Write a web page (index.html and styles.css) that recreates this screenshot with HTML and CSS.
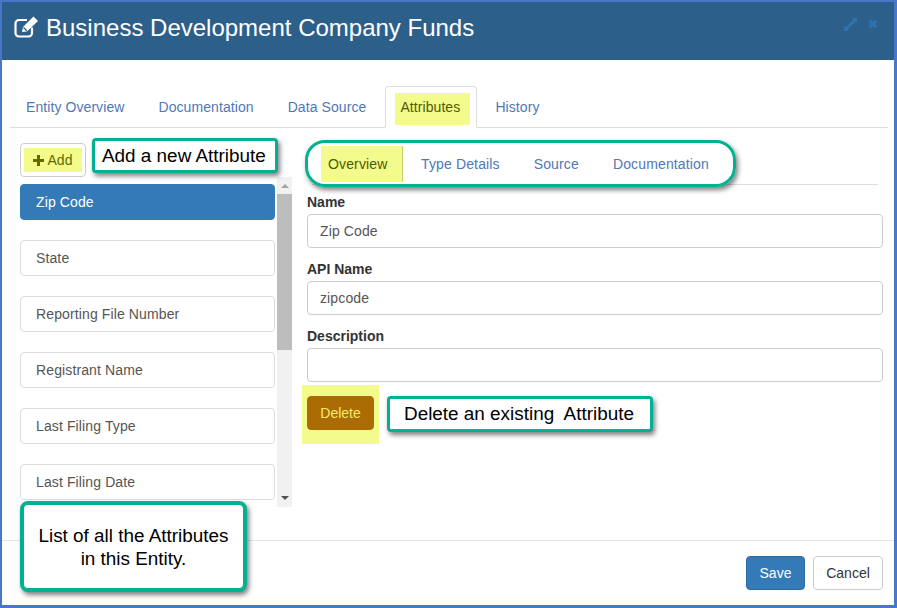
FILE: index.html
```html
<!DOCTYPE html>
<html lang="en">
<head>
  <meta charset="UTF-8" />
  <meta name="viewport" content="width=device-width, initial-scale=1.0" />
  <title>Business Development Company Funds</title>
  <link rel="stylesheet" href="styles.css">
</head>
<body>
  <div class="modal">
    <header class="modal-header">
      <h1>
        <svg class="edit-icon" width="26" height="24" viewBox="0 0 26 24">
          <path d="M18 12.500V18a3.500 3.500 0 0 1-3.500 3.500H5A3.500 3.500 0 0 1 1.500 18V8.500A3.500 3.500 0 0 1 5 5h8" fill="none" stroke="#fff" stroke-width="2.200"/>
          <path d="M8 17l1-5L19.500 1.500l4.500 4.500L13 16.500z" fill="#fff"/>
          <path d="M9.500 12.500l3.500 3.500" stroke="#2d5f8b" stroke-width="1.200"/>
        </svg>
        Business Development Company Funds
      </h1>
      <div class="header-icons">
        <svg width="13" height="13" viewBox="0 0 14 14">
          <path d="M8 0h6v6l-2-2-8 8 2 2H0V8l2 2 8-8z" fill="#2f72ac"/>
        </svg>
        <svg width="10" height="10" viewBox="0 0 12 12">
          <path d="M2 2l8 8M10 2l-8 8" stroke="#2f72ac" stroke-width="3.800"/>
        </svg>
      </div>
    </header>

    <div class="modal-body">
      <ul class="tabs">
        <li><a>Entity Overview</a></li>
        <li><a>Documentation</a></li>
        <li class="before-active"><a>Data Source</a></li>
        <li class="active"><a><span class="mark">Attributes</span></a></li>
        <li><a>History</a></li>
      </ul>

      <div class="columns">
        <div class="left-col">
          <button class="btn btn-add"><span class="mark-add"><svg width="11" height="11" viewBox="0 0 11 11"><path d="M4 0h3v4h4v3H7v4H4V7H0V4h4z" fill="#5f6a00"/></svg> Add</span></button>
          <div class="list-wrap">
            <div class="list">
              <div class="item selected">Zip Code</div>
              <div class="item">State</div>
              <div class="item">Reporting File Number</div>
              <div class="item">Registrant Name</div>
              <div class="item">Last Filing Type</div>
              <div class="item">Last Filing Date</div>
            </div>
            <div class="scrollbar">
              <div class="arrow-up"></div>
              <div class="thumb"></div>
              <div class="arrow-down"></div>
            </div>
          </div>
        </div>

        <div class="right-col">
          <ul class="subtabs">
            <li class="active"><a>Overview</a></li>
            <li><a>Type Details</a></li>
            <li><a>Source</a></li>
            <li><a>Documentation</a></li>
          </ul>
          <label>Name</label>
          <input type="text" value="Zip Code">
          <label>API Name</label>
          <input type="text" value="zipcode">
          <label>Description</label>
          <input class="input-last" type="text" value="">
          <div class="delete-mark">
            <button class="btn btn-delete">Delete</button>
          </div>
        </div>
      </div>
    </div>

    <footer class="modal-footer">
      <button class="btn btn-save">Save</button>
      <button class="btn btn-cancel">Cancel</button>
    </footer>

    <!-- annotations on top of the screen -->
    <div class="callout callout-add">Add a new Attribute</div>
    <div class="callout callout-oval"></div>
    <div class="callout callout-delete">Delete an existing&nbsp; Attribute</div>
    <div class="callout callout-list">List of all the Attributes<br>in this Entity.</div>
  </div>
</body>
</html>
```

FILE: styles.css
```css
* {
  box-sizing: border-box;
}
html, body {
  margin: 0;
  padding: 0;
  height: 100%;
  overflow: hidden;
}
body {
  background: #fff;
  color: #555;
  font-family: "Liberation Sans", Arial, sans-serif;
  font-size: 14px;
}
.modal {
  position: relative;
  width: 897px;
  height: 608px;
  border: 2px solid #4a76c8;
  border-right-width: 3px;
  border-bottom-width: 3px;
  display: flex;
  flex-direction: column;
}
.modal-header {
  height: 58px;
  flex: none;
  background: #2d5f8b;
  color: #fff;
  display: flex;
  align-items: center;
  justify-content: space-between;
  padding: 0 16px 6px 12px;
}
.modal-header h1 {
  margin: 0;
  font-size: 24px;
  font-weight: 400;
  display: flex;
  align-items: center;
  gap: 6px;
}
.edit-icon {
  margin-top: -2px;
}
.header-icons {
  display: flex;
  align-items: center;
  gap: 11px;
  margin-top: -8px;
}
.modal-body {
  flex: 1;
  padding: 26px 6px 0 8px;
  min-height: 0;
}
.tabs, .subtabs {
  list-style: none;
  margin: 0;
  padding: 0;
  display: flex;
}
.tabs {
  border-bottom: 1px solid #ddd;
  height: 42px;
  letter-spacing: 0.08px;
}
.tabs li {
  margin-right: 2px;
}
.tabs li.before-active {
  margin-right: 3px;
}
.tabs li a {
  display: block;
  height: 42px;
  padding: 10px 15px 0;
  line-height: 20px;
  color: #4f78b8;
  border: 1px solid transparent;
  border-radius: 4px 4px 0 0;
}
.tabs li.active a {
  width: 92px;
  padding: 6px 0 0 9px;
  border-color: #ddd #ddd #fff;
  background: #fff;
  color: #555;
}
.mark {
  display: block;
  width: 75px;
  background: #f2fb8c;
  color: #4f5a00;
  padding: 4px 5px;
  height: 32px;
}
.columns {
  display: flex;
  padding: 15px 0 0 10px;
}
.left-col {
  width: 272px;
  flex: none;
}
.btn {
  font-family: inherit;
  font-size: 14px;
  line-height: 20px;
  border-radius: 4px;
  border: 1px solid #ccc;
  background: #fff;
  color: #333;
  padding: 6px 12px;
  height: 34px;
}
.btn-add {
  display: block;
  width: 66px;
  padding: 4px 3px;
}
.mark-add {
  display: flex;
  align-items: center;
  justify-content: center;
  gap: 4px;
  height: 24px;
  padding-right: 1px;
  background: #f2fb8c;
  color: #5f6a00;
}
.list-wrap {
  display: flex;
  height: 330px;
}
.list {
  width: 255px;
  padding-top: 7px;
  flex: none;
  letter-spacing: 0.12px;
}
.item {
  height: 36px;
  margin-bottom: 20px;
  padding: 0 15px;
  line-height: 34px;
  border: 1px solid #ddd;
  border-radius: 4px;
  color: #555;
}
.item.selected {
  background: #337ab7;
  border-color: #337ab7;
  color: #fff;
}
.scrollbar {
  width: 15px;
  margin-left: 2px;
  background: #f1f1f1;
  display: flex;
  flex-direction: column;
  align-items: center;
  position: relative;
}
.arrow-up {
  width: 0;
  height: 0;
  margin-top: 7px;
  border: 4px solid transparent;
  border-top: 0;
  border-bottom: 4px solid #a3a3a3;
}
.thumb {
  width: 15px;
  height: 156px;
  margin-top: 6px;
  background: #bdbdbd;
}
.arrow-down {
  width: 0;
  height: 0;
  margin-top: auto;
  margin-bottom: 7px;
  border: 4px solid transparent;
  border-bottom: 0;
  border-top: 4px solid #505050;
}
.right-col {
  width: 576px;
  margin-left: 15px;
  flex: none;
}
.subtabs {
  width: 566px;
  height: 40px;
  margin: 2px 0 7px 5px;
  padding-left: 9px;
  border-bottom: 1px solid #ddd;
  letter-spacing: 0.14px;
}
.subtabs li a {
  display: block;
  height: 39px;
  padding: 9px 10px 0;
  margin-right: 14px;
  line-height: 20px;
  color: #4f78b8;
}
.subtabs li.active a {
  width: 82px;
  height: 36px;
  margin: 1px 8px 0 0;
  padding: 8px 0 0 7px;
  background: #f2fb8c;
  color: #4f5a00;
  border-right: 1px solid #c9cf70;
}
label {
  display: block;
  height: 20px;
  line-height: 20px;
  font-weight: 700;
  color: #333;
  margin-bottom: 2px;
}
input[type="text"] {
  display: block;
  width: 576px;
  height: 34px;
  margin-bottom: 11px;
  padding: 6px 12px;
  font-family: inherit;
  font-size: 14px;
  letter-spacing: 0.12px;
  color: #555;
  background: #fff;
  border: 1px solid #ccc;
  border-radius: 4px;
}
input.input-last {
  margin-bottom: 3px;
}
.delete-mark {
  width: 77px;
  height: 59px;
  margin: 0 0 0 -5px;
  padding: 11px 5px 0;
  background: #f2fb8c;
}
.btn-delete {
  display: block;
  width: 67px;
  padding: 6px 0;
  background: #ab6c05;
  border-color: #ab6c05;
  color: #f7e96a;
}
.modal-footer {
  height: 65px;
  flex: none;
  border-top: 1px solid #e5e5e5;
  display: flex;
  justify-content: flex-end;
  align-items: flex-start;
  gap: 8px;
  padding: 15px 11px 0 0;
}
.btn-save {
  width: 59px;
  padding: 6px 0;
  background: #337ab7;
  border-color: #2e6da4;
  color: #fff;
}
.btn-cancel {
  width: 70px;
  padding: 6px 0;
}
.callout {
  position: absolute;
  background: #fff;
  border: 3px solid #00b294;
  border-radius: 4px;
  box-shadow: 2px 3px 5px rgba(0, 0, 0, 0.5);
  color: #000;
  font-size: 18.9px;
  line-height: 22px;
}
.callout-add {
  left: 90px;
  top: 136px;
  width: 186px;
  height: 35px;
  padding: 4px 0 0 7px;
}
.callout-oval {
  left: 303px;
  top: 138px;
  width: 431px;
  height: 47px;
  background: transparent;
  border-radius: 20px;
}
.callout-delete {
  left: 385px;
  top: 394px;
  width: 266px;
  height: 36px;
  padding: 4px 0 0 14px;
}
.callout-list {
  left: 18px;
  top: 499px;
  width: 227px;
  height: 91px;
  border-width: 4px;
  border-radius: 8px;
  padding-top: 19px;
  line-height: 23px;
  text-align: center;
}
```
